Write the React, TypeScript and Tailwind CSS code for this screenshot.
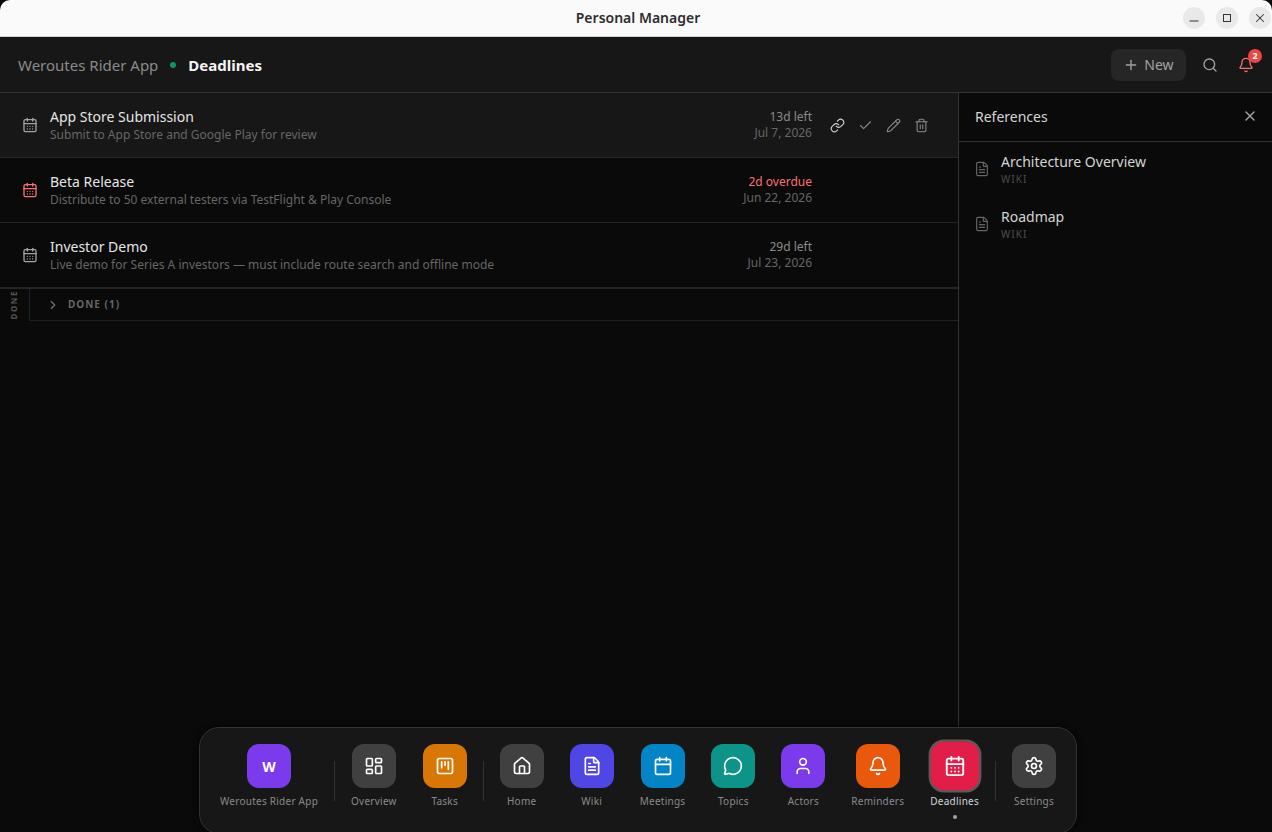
import {
  Bell,
  Calendar,
  CalendarDays,
  Check,
  ChevronRight,
  FileText,
  House,
  LayoutDashboard,
  Link,
  MessageCircle,
  Minus,
  Pencil,
  Plus,
  Search,
  Settings,
  SquareKanban,
  Trash2,
  User,
  X,
} from "lucide-react";

const deadlines = [
  { title: "App Store Submission", sub: "Submit to App Store and Google Play for review", left: "13d left", date: "Jul 7, 2026", hovered: true },
  { title: "Beta Release", sub: "Distribute to 50 external testers via TestFlight & Play Console", left: "2d overdue", date: "Jun 22, 2026", overdue: true },
  { title: "Investor Demo", sub: "Live demo for Series A investors — must include route search and offline mode", left: "29d left", date: "Jul 23, 2026" },
];

function DockItem({ label, color, icon, active }: { label: string; color: string; icon: React.ReactNode; active?: boolean }) {
  return (
    <div className="relative flex flex-col items-center px-[13px]">
      <div
        className={`flex h-11 w-11 items-center justify-center rounded-[12px] text-white ${color} ${active ? "scale-110 ring-2 ring-[#5a5a5a]" : ""}`}
      >
        {icon}
      </div>
      <span className={`mt-[6px] whitespace-nowrap text-[10px] leading-[14px] tracking-[0.025em] ${active ? "text-[#d4d4d4]" : "text-[#8a8a8a]"}`}>
        {label}
      </span>
      {active && <span className="absolute bottom-[-11px] h-1 w-1 rounded-full bg-[#a3a3a3]" />}
    </div>
  );
}

function DockSep() {
  return <div className="mx-[3px] mt-[17px] h-10 w-px bg-[#333333]" />;
}

export default function App() {
  return (
    <div className="relative h-[832px] w-[1272px] overflow-hidden bg-[#0a0a0a] font-['Noto_Sans',sans-serif]">
      {/* title bar */}
      <div className="relative flex h-[37px] items-center justify-center rounded-t-[10px] border-b border-[#d4d4d4] bg-[#fafafa] pb-[2px] pl-1">
        <span className="text-[14px] font-semibold text-[#2e2e2e]">Personal Manager</span>
        <div className="absolute right-[1px] top-[7px] flex gap-[11px]">
          <button className="flex h-[22px] w-[22px] items-center justify-center rounded-full bg-[#e9e9e9] pt-[6px] text-[#333333]">
            <Minus size={14} strokeWidth={1.75} />
          </button>
          <button className="flex h-[22px] w-[22px] items-center justify-center rounded-full bg-[#e9e9e9]">
            <span className="h-2 w-2 border border-[#333333]" />
          </button>
          <button className="flex h-[22px] w-[22px] items-center justify-center rounded-full bg-[#e9e9e9] text-[#333333]">
            <X size={14} strokeWidth={1.75} />
          </button>
        </div>
      </div>

      {/* header */}
      <div className="flex h-[56px] items-center justify-between border-b border-[#333333] bg-[#171717] pl-[18px] pr-[18px]">
        <div className="flex items-center pt-[2px]">
          <span className="text-[15px] text-[#8a8a8a]">Weroutes Rider App</span>
          <span className="mx-3 mb-[2px] h-[6px] w-[6px] rounded-full bg-[#059669]" />
          <span className="text-[15px] font-bold text-[#f5f5f5]">Deadlines</span>
        </div>
        <div className="flex items-center">
          <button className="flex h-8 w-[75px] items-center justify-center gap-[5px] rounded-[8px] bg-[#262626] text-[14px] text-[#a3a3a3]">
            <Plus size={16} />
            New
          </button>
          <Search size={16} className="ml-4 text-[#a3a3a3]" />
          <div className="relative ml-[20px]">
            <Bell size={16} className="text-[#f87171]" />
            <span className="absolute right-[-8px] top-[-8px] flex h-[14px] w-[14px] items-center justify-center rounded-full bg-[#ef4444] text-[9px] font-bold leading-none text-white">
              2
            </span>
          </div>
        </div>
      </div>

      <div className="flex h-[739px]">
        {/* list */}
        <div className="flex w-[958px] flex-col">
          {deadlines.map((d) => (
            <div
              key={d.title}
              className={`flex h-[65px] items-center border-b border-[#262626] pl-[22px] pr-[23px] ${d.hovered ? "bg-[#171717]" : ""}`}
            >
              <CalendarDays size={16} className={d.overdue ? "text-[#f87171]" : "text-[#a3a3a3]"} />
              <div className="ml-3 min-w-0 flex-1">
                <div className="text-[14px] leading-[19px] text-[#e5e5e5]">{d.title}</div>
                <div className="text-[12px] leading-[17px] text-[#666666]">{d.sub}</div>
              </div>
              <div className="pb-[1px] text-right text-[12px] leading-4">
                <div className={d.overdue ? "text-[#f87171]" : "text-[#8a8a8a]"}>{d.left}</div>
                <div className="text-[#666666]">{d.date}</div>
              </div>
              <div className={`ml-[11px] flex w-[112px] ${d.hovered ? "" : "invisible"}`}>
                <span className="flex w-7 justify-center text-[#d4d4d4]"><Link size={15} strokeWidth={1.75} /></span>
                <span className="flex w-7 justify-center text-[#8a8a8a]"><Check size={15} strokeWidth={1.75} /></span>
                <span className="flex w-7 justify-center text-[#8a8a8a]"><Pencil size={15} strokeWidth={1.75} /></span>
                <span className="flex w-7 justify-center text-[#8a8a8a]"><Trash2 size={15} strokeWidth={1.75} /></span>
              </div>
            </div>
          ))}

          <div className="flex h-[33px] border-t border-[#262626]">
            <div className="flex w-[30px] items-center justify-center border-r border-[#1f1f1f] pr-[1px]">
              <span className="rotate-180 text-[8px] font-bold tracking-[0.2em] text-[#555555] [writing-mode:vertical-rl]">DONE</span>
            </div>
            <div className="flex flex-1 items-center border-b border-[#1f1f1f] pl-4">
              <ChevronRight size={14} className="text-[#737373]" />
              <span className="ml-2 text-[10px] font-bold tracking-[0.1em] text-[#666666]">DONE (1)</span>
            </div>
          </div>
        </div>

        {/* references panel */}
        <div className="flex flex-1 flex-col border-l border-[#333333]">
          <div className="flex h-[49px] items-center justify-between border-b border-[#333333] pb-[2px] pl-4 pr-[14px]">
            <span className="text-[14px] text-[#d4d4d4]">References</span>
            <X size={16} className="text-[#a3a3a3]" />
          </div>
          <div className="flex flex-col gap-[21px] pt-[10px]">
            {["Architecture Overview", "Roadmap"].map((r) => (
              <div key={r} className="flex items-center pl-[15px]">
                <FileText size={16} strokeWidth={1.75} className="text-[#666666]" />
                <div className="ml-[11px]">
                  <div className="text-[14px] leading-[20px] text-[#d4d4d4]">{r}</div>
                  <div className="text-[10px] leading-[14px] tracking-[0.1em] text-[#4d4d4d]">WIKI</div>
                </div>
              </div>
            ))}
          </div>
        </div>
      </div>

      {/* dock */}
      <div className="absolute bottom-[-2px] left-[199px] flex h-[107px] items-start rounded-[20px] border border-[#333333] bg-[#171717] px-[7px] pt-4 shadow-[0_0_6px_rgba(0,0,0,0.8)]">
        <DockItem label="Weroutes Rider App" color="bg-[#7c3aed]" icon={<span className="text-[14px] font-bold">W</span>} />
        <DockSep />
        <DockItem label="Overview" color="bg-[#404040]" icon={<LayoutDashboard size={20} />} />
        <DockItem label="Tasks" color="bg-[#d97706]" icon={<SquareKanban size={20} />} />
        <DockSep />
        <DockItem label="Home" color="bg-[#404040]" icon={<House size={20} />} />
        <DockItem label="Wiki" color="bg-[#4f46e5]" icon={<FileText size={20} />} />
        <DockItem label="Meetings" color="bg-[#0284c7]" icon={<Calendar size={20} />} />
        <DockItem label="Topics" color="bg-[#0d9488]" icon={<MessageCircle size={20} />} />
        <DockItem label="Actors" color="bg-[#7c3aed]" icon={<User size={20} />} />
        <DockItem label="Reminders" color="bg-[#ea580c]" icon={<Bell size={20} />} />
        <DockItem label="Deadlines" color="bg-[#e11d48]" icon={<CalendarDays size={20} />} active />
        <DockSep />
        <DockItem label="Settings" color="bg-[#404040]" icon={<Settings size={20} />} />
      </div>
    </div>
  );
}
